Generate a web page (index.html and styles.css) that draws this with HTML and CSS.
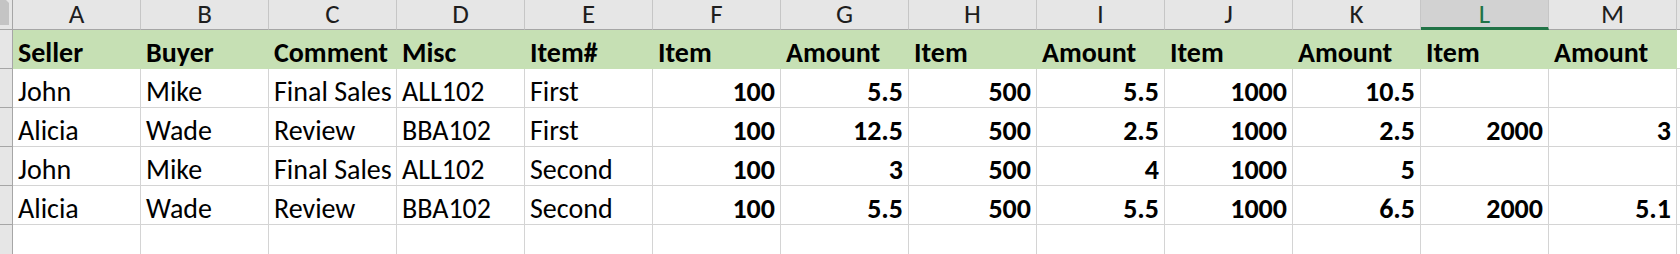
FILE: index.html
```html
<!DOCTYPE html>
<html>
<head>
<meta charset="utf-8">
<link rel="stylesheet" href="styles.css">
</head>
<body>
<div class="sheet">
  <div class="corner"><svg width="12" height="29" viewBox="0 0 12 29"><polygon points="0,0 6,0 9,3 9,25 0,25" fill="#c4c4c4"/></svg></div>
  <div class="ch">A</div><div class="ch">B</div><div class="ch">C</div><div class="ch">D</div><div class="ch">E</div><div class="ch">F</div><div class="ch">G</div><div class="ch">H</div><div class="ch">I</div><div class="ch">J</div><div class="ch">K</div><div class="ch sel">L</div><div class="ch">M</div><div class="ch end"></div>

  <div class="rh"></div>
  <div class="c hd">Seller</div><div class="c hd">Buyer</div><div class="c hd">Comment</div><div class="c hd">Misc</div><div class="c hd">Item#</div><div class="c hd">Item</div><div class="c hd">Amount</div><div class="c hd">Item</div><div class="c hd">Amount</div><div class="c hd">Item</div><div class="c hd">Amount</div><div class="c hd">Item</div><div class="c hd">Amount</div><div class="c"></div>

  <div class="rh"></div>
  <div class="c">John</div><div class="c">Mike</div><div class="c">Final Sales</div><div class="c">ALL102</div><div class="c">First</div><div class="c n">100</div><div class="c n">5.5</div><div class="c n">500</div><div class="c n">5.5</div><div class="c n">1000</div><div class="c n">10.5</div><div class="c n"></div><div class="c n"></div><div class="c"></div>

  <div class="rh"></div>
  <div class="c">Alicia</div><div class="c">Wade</div><div class="c">Review</div><div class="c">BBA102</div><div class="c">First</div><div class="c n">100</div><div class="c n">12.5</div><div class="c n">500</div><div class="c n">2.5</div><div class="c n">1000</div><div class="c n">2.5</div><div class="c n">2000</div><div class="c n">3</div><div class="c"></div>

  <div class="rh"></div>
  <div class="c">John</div><div class="c">Mike</div><div class="c">Final Sales</div><div class="c">ALL102</div><div class="c">Second</div><div class="c n">100</div><div class="c n">3</div><div class="c n">500</div><div class="c n">4</div><div class="c n">1000</div><div class="c n">5</div><div class="c n"></div><div class="c n"></div><div class="c"></div>

  <div class="rh"></div>
  <div class="c">Alicia</div><div class="c">Wade</div><div class="c">Review</div><div class="c">BBA102</div><div class="c">Second</div><div class="c n">100</div><div class="c n">5.5</div><div class="c n">500</div><div class="c n">5.5</div><div class="c n">1000</div><div class="c n">6.5</div><div class="c n">2000</div><div class="c n">5.1</div><div class="c"></div>

  <div class="rh"></div>
  <div class="c"></div><div class="c"></div><div class="c"></div><div class="c"></div><div class="c"></div><div class="c"></div><div class="c"></div><div class="c"></div><div class="c"></div><div class="c"></div><div class="c"></div><div class="c"></div><div class="c"></div><div class="c"></div>
</div>
</body>
</html>
```
FILE: styles.css
```css
html, body {
  margin: 0;
  padding: 0;
  background: #ffffff;
  overflow: hidden;
}
.sheet {
  display: grid;
  grid-template-columns: 13px repeat(13, 128px) 1fr;
  grid-template-rows: 30px repeat(6, 39px);
  font-family: Carlito, Calibri, Lato, "Liberation Sans", sans-serif;
  font-size: 28px;
  color: #000;
}
.corner {
  background: #e6e6e6;
  border-right: 1px solid #a6a6a6;
  border-bottom: 1px solid #a6a6a6;
  box-sizing: border-box;
  overflow: hidden;
}
.corner svg { display: block; }
.ch {
  background: #e6e6e6;
  border-right: 1px solid #c6c6c6;
  border-bottom: 1px solid #a6a6a6;
  box-sizing: border-box;
  display: flex;
  align-items: flex-end;
  justify-content: center;
  line-height: 26px;
  font-size: 27px;
  color: #1e1e1e;
  padding-bottom: 2px;
}
.ch.sel {
  background: #d2d2d2;
  border-bottom: 3px solid #217346;
  color: #217346;
  padding-bottom: 0;
}
.ch.end { border-right: none; }
.rh {
  background: #e6e6e6;
  border-right: 1px solid #a6a6a6;
  border-bottom: 1px solid #a6a6a6;
  box-sizing: border-box;
}
.c {
  border-right: 1px solid #d4d4d4;
  border-bottom: 1px solid #d4d4d4;
  box-sizing: border-box;
  display: flex;
  align-items: flex-end;
  padding: 0 5px 1px 5px;
  line-height: 29px;
  white-space: nowrap;
  overflow: visible;
}
.c.hd {
  background: #c6e0b4;
  border-color: #c6e0b4;
  font-weight: bold;
}
.c.n {
  justify-content: flex-end;
  font-weight: bold;
}
```
